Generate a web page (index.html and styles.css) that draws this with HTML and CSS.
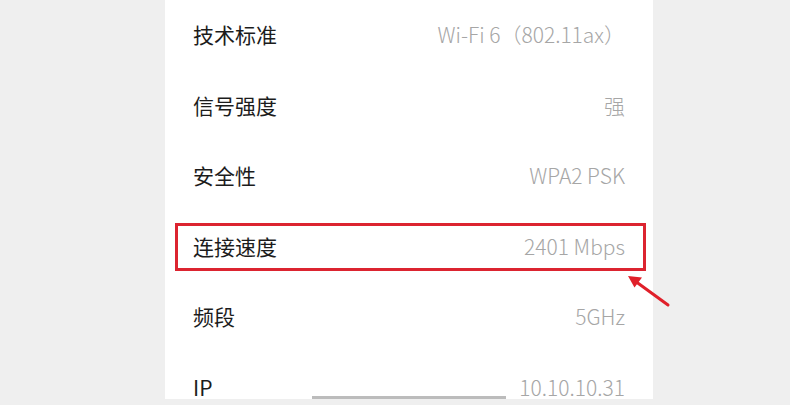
FILE: index.html
```html
<!DOCTYPE html>
<html lang="zh-CN">
<head>
<meta charset="utf-8">
<link rel="stylesheet" href="styles.css">
</head>
<body>
<div class="page">
  <div class="panel">
    <div class="list">
      <div class="row"><span class="label">技术标准</span><span class="value">Wi-Fi 6（802.11ax）</span></div>
      <div class="row"><span class="label">信号强度</span><span class="value">强</span></div>
      <div class="row"><span class="label">安全性</span><span class="value">WPA2 PSK</span></div>
      <div class="row"><span class="label">连接速度</span><span class="value">2401 Mbps</span></div>
      <div class="row"><span class="label">频段</span><span class="value">5GHz</span></div>
      <div class="row"><span class="label">IP</span><span class="value">10.10.10.31</span></div>
    </div>
    <div class="home-bar"></div>
  </div>
  <div class="highlight"></div>
  <svg class="arrow" width="60" height="50" viewBox="0 0 60 50">
    <line x1="43" y1="40" x2="10" y2="16" stroke="#e0202a" stroke-width="3" stroke-linecap="round"/>
    <polygon points="3,11 17,12.5 9.5,22.5" fill="#e0202a"/>
  </svg>
</div>
</body>
</html>
```
FILE: styles.css
```css
html, body {
  margin: 0;
  padding: 0;
  background: #efefef;
}
.page {
  position: relative;
  width: 790px;
  height: 405px;
  overflow: hidden;
}
.panel {
  position: relative;
  margin-left: 165px;
  width: 488px;
  height: 399px;
  background: #ffffff;
  overflow: hidden;
}
.list {
  display: flex;
  flex-direction: column;
  margin-top: -1px;
}
.row {
  display: flex;
  align-items: center;
  justify-content: space-between;
  height: 70.5px;
  padding: 0 28px;
  flex-shrink: 0;
  line-height: 22px;
}
.label {
  font-family: "Noto Sans CJK SC", "Noto Sans", sans-serif;
  font-size: 21px;
  color: #1c1c1c;
}
.value {
  font-family: "Noto Sans CJK SC", "Noto Sans", sans-serif;
  font-size: 21px;
  font-weight: 300;
  color: #a6a6a6;
}
.home-bar {
  position: absolute;
  left: 147px;
  top: 396px;
  width: 194px;
  height: 3px;
  background: #bcbcbc;
}
.highlight {
  position: absolute;
  left: 175px;
  top: 223px;
  width: 465px;
  height: 42px;
  border: 3px solid #dc2430;
}
.arrow {
  position: absolute;
  left: 625px;
  top: 265px;
}
```
